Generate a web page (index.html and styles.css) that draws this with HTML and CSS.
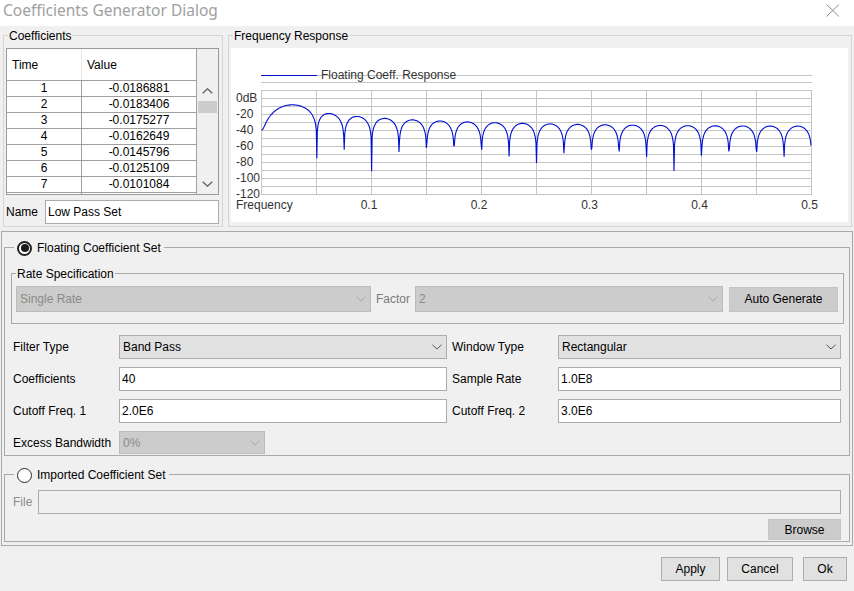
FILE: index.html
```html
<!DOCTYPE html>
<html lang="en">
<head>
<meta charset="utf-8">
<title>Coefficients Generator Dialog</title>
<link rel="stylesheet" href="styles.css">
</head>
<body>
<div class="titlebar">
  <span class="title">Coefficients Generator Dialog</span>
  <svg class="close" width="14" height="13" viewBox="0 0 14 13"><path d="M0.5 0.5L13 12.5M13 0.5L0.5 12.5" stroke="#8a8a8a" stroke-width="1" fill="none"/></svg>
</div>

<div class="top">
  <fieldset class="grp light coeffs">
    <legend class="lg">Coefficients</legend>
    <div class="tablebox">
      <div class="tcol">
        <div class="thead"><div class="c1 th">Time</div><div class="c2 th">Value</div></div>
        <div class="tr"><div class="c1">1</div><div class="c2">-0.0186881</div></div>
        <div class="tr"><div class="c1">2</div><div class="c2">-0.0183406</div></div>
        <div class="tr"><div class="c1">3</div><div class="c2">-0.0175277</div></div>
        <div class="tr"><div class="c1">4</div><div class="c2">-0.0162649</div></div>
        <div class="tr"><div class="c1">5</div><div class="c2">-0.0145796</div></div>
        <div class="tr"><div class="c1">6</div><div class="c2">-0.0125109</div></div>
        <div class="tr"><div class="c1">7</div><div class="c2">-0.0101084</div></div>
        <div class="tr"><div class="c1"></div><div class="c2"></div></div>
      </div>
      <div class="vscroll">
        <div class="corner"></div>
        <div class="sbtn"><svg width="11" height="6" viewBox="0 0 11 6"><path d="M0.7 5.3L5.5 0.8L10.3 5.3" stroke="#606060" stroke-width="1.3" fill="none"/></svg></div>
        <div class="thumb"></div>
        <div class="strack"></div>
        <div class="sbtn"><svg width="11" height="6" viewBox="0 0 11 6"><path d="M0.7 0.7L5.5 5.2L10.3 0.7" stroke="#606060" stroke-width="1.3" fill="none"/></svg></div>
      </div>
    </div>
    <div class="namerow">
      <span class="namelbl">Name</span>
      <div class="field namefield">Low Pass Set</div>
    </div>
  </fieldset>

  <fieldset class="grp light freq">
    <legend class="lg">Frequency Response</legend>
    <div class="chart">
      <svg width="617" height="174" viewBox="231 48 617 174">
        <g class="grid" stroke="#c4c4c4" stroke-width="1" fill="none">
          <path d="M317 75.5H812M261 82.5H812"/>
          <path d="M261 90.5H812M261 98.5H812M261 106.5H812M261 114.5H812M261 122.5H812M261 130.5H812M261 138.5H812M261 146.5H812M261 154.5H812M261 162.5H812M261 170.5H812M261 178.5H812M261 186.5H812M261 194.5H812"/>
          <path d="M261.5 90.5V194.5M316.5 90.5V194.5M371.5 90.5V194.5M426.5 90.5V194.5M481.5 90.5V194.5M536.5 90.5V194.5M591.5 90.5V194.5M646.5 90.5V194.5M701.5 90.5V194.5M756.5 90.5V194.5M811.5 90.5V194.5"/>
        </g>
        <path d="M261 75.5H317" stroke="#0010c8" stroke-width="1.2"/>
        <g class="ctext">
          <text x="321" y="79">Floating Coeff. Response</text>
          <text x="236" y="102">0dB</text>
          <text x="236" y="118">-20</text>
          <text x="236" y="134">-40</text>
          <text x="236" y="150">-60</text>
          <text x="236" y="166">-80</text>
          <text x="236" y="182">-100</text>
          <text x="236" y="198">-120</text>
          <text x="236" y="209">Frequency</text>
          <text x="369" y="209" text-anchor="middle">0.1</text>
          <text x="479" y="209" text-anchor="middle">0.2</text>
          <text x="589.5" y="209" text-anchor="middle">0.3</text>
          <text x="699.5" y="209" text-anchor="middle">0.4</text>
          <text x="809.5" y="209" text-anchor="middle">0.5</text>
        </g>
        <polyline id="curve" points="" fill="none" stroke="#0010d0" stroke-width="1.1"/>
      </svg>
    </div>
  </fieldset>
</div>

<div class="panel">
  <fieldset class="grp dark floating">
    <legend class="lg rlg"><span class="rl"><span class="radio on"><span class="dot"></span></span><span>Floating Coefficient Set</span></span></legend>

    <fieldset class="grp dark rate">
      <legend class="lg">Rate Specification</legend>
      <div class="raterow">
        <div class="combo dis single"><span>Single Rate</span><svg width="10" height="6" viewBox="0 0 10 6"><path d="M0.5 0.8L5 5L9.5 0.8" stroke="#a8a8a8" fill="none"/></svg></div>
        <span class="factorlbl">Factor</span>
        <div class="combo dis factor"><span>2</span><svg width="10" height="6" viewBox="0 0 10 6"><path d="M0.5 0.8L5 5L9.5 0.8" stroke="#a8a8a8" fill="none"/></svg></div>
        <div class="btn gray autogen">Auto Generate</div>
      </div>
    </fieldset>

    <div class="formgrid">
      <span class="lbl">Filter Type</span>
      <div class="combo"><span>Band Pass</span><svg width="10" height="6" viewBox="0 0 10 6"><path d="M0.5 0.8L5 5L9.5 0.8" stroke="#555" fill="none"/></svg></div>
      <span></span>
      <span class="lbl">Window Type</span>
      <div class="combo"><span>Rectangular</span><svg width="10" height="6" viewBox="0 0 10 6"><path d="M0.5 0.8L5 5L9.5 0.8" stroke="#555" fill="none"/></svg></div>

      <span class="lbl">Coefficients</span>
      <div class="field">40</div>
      <span></span>
      <span class="lbl">Sample Rate</span>
      <div class="field">1.0E8</div>

      <span class="lbl">Cutoff Freq. 1</span>
      <div class="field">2.0E6</div>
      <span></span>
      <span class="lbl">Cutoff Freq. 2</span>
      <div class="field">3.0E6</div>

      <span class="lbl">Excess Bandwidth</span>
      <div class="combo dis excess"><span>0%</span><svg width="10" height="6" viewBox="0 0 10 6"><path d="M0.5 0.8L5 5L9.5 0.8" stroke="#a8a8a8" fill="none"/></svg></div>
    </div>
  </fieldset>

  <fieldset class="grp dark imported">
    <legend class="lg rlg"><span class="rl"><span class="radio"></span><span>Imported Coefficient Set</span></span></legend>
    <div class="filerow">
      <span class="filelbl">File</span>
      <div class="field disfield"></div>
    </div>
    <div class="browserow"><div class="btn gray browse">Browse</div></div>
  </fieldset>
</div>

<div class="footer">
  <div class="btn apply">Apply</div>
  <div class="btn cancel">Cancel</div>
  <div class="btn ok">Ok</div>
</div>

<script src="script.js"></script>
</body>
</html>
```

FILE: styles.css
```css
* { box-sizing: border-box; }

html, body {
  margin: 0;
  padding: 0;
}

body {
  width: 854px;
  height: 591px;
  overflow: hidden;
  background: #f0f0f0;
  font-family: "Liberation Sans", Arial, sans-serif;
  font-size: 12px;
  line-height: 14px;
  color: #000;
}

/* title bar */
.titlebar {
  height: 26px;
  background: #ffffff;
  display: flex;
  align-items: flex-start;
  justify-content: space-between;
  padding: 0 14px 0 3px;
}
.title {
  font-family: "Noto Sans", "Open Sans", sans-serif;
  font-size: 15.5px;
  line-height: 20px;
  color: #a0a0a0;
}
.close { margin-top: 4px; }

/* generic group */
.grp {
  margin: 0;
  padding: 0;
  min-width: 0;
  border: 1px solid #a9a9a9;
}
.grp.light { border-color: #d6d6d6; }
.lg {
  padding: 2px 1px 0;
  margin-left: 4px;
  font-size: 12px;
  line-height: 14px;
}

/* top section */
.top {
  display: flex;
  padding: 1px 0 0 3px;
  gap: 5px;
}
.coeffs {
  width: 220px;
  height: 200px;
}
.freq {
  width: 624px;
  height: 200px;
}

.tablebox {
  margin: 5px 0 0 2px;
  width: 213px;
  height: 147px;
  border: 1px solid #9a9a9a;
  display: flex;
}
.tcol {
  width: 190px;
  background: #fff;
  border-right: 1px solid #a0a0a0;
  overflow: hidden;
}
.thead {
  display: flex;
  height: 32px;
  border-bottom: 1px solid #a0a0a0;
}
.thead .th {
  display: flex;
  align-items: center;
  padding-left: 5px;
}
.thead .c1 { border-right: 1px solid #e6e6e6; }
.tr {
  display: flex;
  height: 16px;
  border-bottom: 1px solid #a0a0a0;
}
.c1 {
  width: 75px;
  flex: none;
}
.tr .c1 {
  border-right: 1px solid #a0a0a0;
  text-align: center;
  line-height: 15px;
}
.c2 { flex: 1; }
.tr .c2 {
  text-align: center;
  line-height: 15px;
}

.vscroll {
  width: 21px;
  display: flex;
  flex-direction: column;
  background: #f0f0f0;
}
.corner { height: 31px; flex: none; }
.sbtn {
  height: 21px;
  flex: none;
  display: flex;
  align-items: center;
  justify-content: center;
}
.thumb {
  height: 12px;
  margin: 0 1px;
  background: #cdcdcd;
  flex: none;
}
.strack { flex: 1; }

.namerow {
  display: flex;
  align-items: center;
  margin: 5px 0 0 2px;
}
.namelbl { width: 39px; }
.namefield { width: 174px; }

.chart {
  margin: 5px 3px 0 2px;
  height: 174px;
  background: #fff;
}
.chart svg { display: block; }
.ctext {
  font-family: "Liberation Sans", Arial, sans-serif;
  font-size: 12px;
  fill: #333;
}

/* fields */
.field {
  height: 24px;
  border: 1px solid #ababab;
  background: #fff;
  padding-left: 2px;
  display: flex;
  align-items: center;
}
.disfield { background: #f0f0f0; }

.combo {
  height: 24px;
  border: 1px solid #adadad;
  background: #e1e1e1;
  display: flex;
  align-items: center;
  justify-content: space-between;
  padding: 0 4px 0 3px;
}
.combo.dis {
  background: #cccccc;
  border-color: #bcbcbc;
  color: #8a8a8a;
}

.btn {
  height: 24px;
  border: 1px solid #adadad;
  background: #e1e1e1;
  display: flex;
  align-items: center;
  justify-content: center;
}
.btn.gray {
  background: #cccccc;
  border-color: #c4c4c4;
}

/* lower panel */
.panel {
  margin: 4px 0 0 1px;
  width: 852px;
  height: 315px;
  border: 1px solid #a9a9a9;
  padding: 6px 2px 0 2px;
}
.rlg {
  margin-left: 9px;
  padding: 2px 3px 0;
}
.rl {
  display: flex;
  align-items: center;
  height: 16px;
  gap: 5px;
}
.radio {
  width: 15px;
  height: 15px;
  border-radius: 50%;
  border: 1.5px solid #2a2a2a;
  background: #fff;
  display: flex;
  align-items: center;
  justify-content: center;
  flex: none;
}
.radio.on { border-width: 2px; border-color: #222; }
.radio.on .dot {
  width: 8px;
  height: 8px;
  border-radius: 50%;
  background: #1a1a1a;
}

.floating {
  height: 218px;
}
.rate {
  margin: 9px 5px 0 6px;
  height: 59px;
}
.rate .lg { margin-left: 4px; }
.raterow {
  display: flex;
  align-items: center;
  padding: 5px 0 0 4px;
}
.single { width: 355px; height: 26px; }
.factorlbl {
  width: 44px;
  padding-left: 5px;
  color: #7a7a7a;
}
.factor { width: 308px; height: 26px; }
.autogen {
  width: 109px;
  height: 25px;
  margin-left: 6px;
}

.formgrid {
  display: grid;
  grid-template-columns: 106px 328px 5px 106px 283px;
  grid-auto-rows: 24px;
  row-gap: 8px;
  align-items: center;
  margin-top: 11px;
  padding-left: 8px;
}
.formgrid .lbl { align-self: center; }
.excess {
  width: 146px;
  height: 23px;
  align-self: start;
}

.imported {
  margin-top: 9px;
  height: 77px;
}
.filerow {
  display: flex;
  align-items: center;
  padding: 7px 0 0 8px;
}
.filelbl {
  width: 25px;
  color: #8a8a8a;
}
.filerow .field { width: 803px; }
.browserow {
  display: flex;
  justify-content: flex-end;
  margin-top: 5px;
  padding-right: 8px;
}
.browse {
  width: 73px;
  height: 21px;
}

/* footer */
.footer {
  display: flex;
  justify-content: flex-end;
  padding-right: 7px;
  margin-top: 11px;
}
.apply { width: 59px; }
.cancel { width: 66px; margin-left: 7px; }
.ok { width: 44px; margin-left: 10px; }
```

FILE: script.js
```js
(function () {
  var N = 40, M = (N - 1) / 2, h = [];
  for (var n = 0; n < N; n++) {
    var t = n - M;
    h.push((Math.sin(2 * Math.PI * 0.03 * t) - Math.sin(2 * Math.PI * 0.02 * t)) / (Math.PI * t));
  }
  var pts = [];
  var x0 = 261.5, span = 1100, bins = 2048;
  for (var i = 0; i < bins / 2; i++) {
    var f = i / bins, re = 0, im = 0;
    for (var k = 0; k < N; k++) {
      re += h[k] * Math.cos(2 * Math.PI * f * k);
      im -= h[k] * Math.sin(2 * Math.PI * f * k);
    }
    var mag = Math.sqrt(re * re + im * im);
    var db = 20 * Math.log10(Math.max(mag, 1e-7));
    var y = 98.5 - db * 0.8;
    if (y > 194.5) y = 194.5;
    if (y < 90.5) y = 90.5;
    pts.push((x0 + span * f).toFixed(2) + ',' + y.toFixed(1));
  }
  document.getElementById('curve').setAttribute('points', pts.join(' '));
})();
```
